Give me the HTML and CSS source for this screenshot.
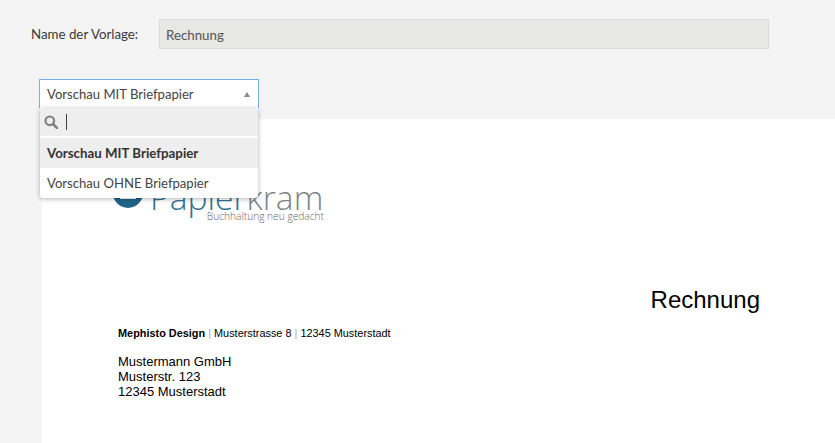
FILE: index.html
```html
<!DOCTYPE html>
<html lang="de">
<head>
<meta charset="utf-8">
<title>Vorlage</title>
<link rel="stylesheet" href="styles.css">
</head>
<body>
<div class="form-row">
  <label class="label">Name der Vorlage:</label>
  <div class="name-input">Rechnung</div>
</div>
<div class="select-wrap">
  <div class="select">
    <span>Vorschau MIT Briefpapier</span>
    <span class="arrow"></span>
  </div>
  <div class="dropdown">
    <div class="search">
      <svg class="search-icon" viewBox="0 0 14 14" width="14" height="14"><circle cx="5.8" cy="5.8" r="4.3" fill="none" stroke="#808080" stroke-width="2.2"/><path d="M9 9l4 4" stroke="#808080" stroke-width="2.6" stroke-linecap="round"/></svg>
      <span class="caret"></span>
    </div>
    <div class="option active">Vorschau MIT Briefpapier</div>
    <div class="option">Vorschau OHNE Briefpapier</div>
  </div>
</div>
<main class="paper">
  <div class="logo">
    <svg class="logo-mark" viewBox="0 0 30 30" width="30" height="30"><circle cx="15" cy="15" r="15" fill="#1f6488"/><rect x="7" y="6" width="16" height="15" fill="#fff"/><rect x="9" y="8" width="12" height="11" fill="#1f6488"/></svg>
    <div class="logo-text">
      <div class="logo-name"><span class="blue">Papier</span>kram</div>
      <div class="logo-tag">Buchhaltung neu gedacht</div>
    </div>
  </div>
  <h1 class="doc-title">Rechnung</h1>
  <div class="sender"><b>Mephisto Design</b> <i>|</i> Musterstrasse 8 <i>|</i> 12345 Musterstadt</div>
  <address class="recipient">Mustermann GmbH<br>Musterstr. 123<br>12345 Musterstadt</address>
</main>
</body>
</html>
```
FILE: styles.css
```css
* { box-sizing: border-box; }
html, body { height: 100%; }
body {
  margin: 0;
  background: #f4f4f4;
  font-family: "Lato", "Noto Sans", sans-serif;
  font-size: 13.3px;
  color: #333;
  overflow: hidden;
  position: relative;
}
.form-row {
  display: flex;
  align-items: center;
  padding: 19px 0 0 31px;
}
.label { width: 128px; color: #3a3a3a; }
.name-input {
  width: 610px;
  height: 30px;
  line-height: 30px;
  padding-left: 6px;
  background: #e7e7e3;
  border: 1px solid #dcdcd9;
  color: #555;
}
.select-wrap {
  position: absolute;
  left: 39px;
  top: 79px;
  width: 220px;
  z-index: 2;
  font-size: 13.1px;
}
.select {
  height: 29px;
  background: #fff;
  border: 1px solid #6fb1e8;
  border-bottom: 0;
  display: flex;
  align-items: center;
  justify-content: space-between;
  padding: 0 8px 0 7px;
  color: #444;
}
.arrow {
  width: 0;
  height: 0;
  border-left: 3.5px solid transparent;
  border-right: 3.5px solid transparent;
  border-top: 0;
  border-bottom: 5px solid #888;
}
.dropdown {
  margin-left: 1px;
  width: 218px;
  background: #fff;
  box-shadow: 0 1px 5px rgba(0,0,0,.3);
  border-radius: 0 0 3px 3px;
}
.search {
  height: 28px;
  background: #eee;
  display: flex;
  align-items: center;
  padding-left: 4px;
  margin-bottom: 2px;
}
.search-icon { display: block; }
.caret {
  width: 1px;
  height: 16px;
  background: #444;
  margin-left: 8px;
}
.option {
  height: 30px;
  line-height: 30px;
  padding-left: 7px;
  color: #444;
}
.option.active { background: #eee; font-weight: 700; color: #333; font-size: 13.3px; }
.paper {
  margin: 70px 0 0 42px;
  height: 324px;
  background: #fff;
  padding: 63px 75px 0 71px;
  font-family: "Liberation Sans", Arial, sans-serif;
  color: #000;
}
.logo { display: flex; align-items: flex-start; }
.logo-mark { flex: none; margin-top: -4px; }
.logo-text { margin-left: 5px; width: 177px; }
.logo-name {
  font-family: "Open Sans", sans-serif;
  font-weight: 300;
  font-size: 33.6px;
  line-height: 30px;
  color: #7f8588;
  white-space: nowrap;
  padding-left: 2px;
}
.blue { color: #2f7394; }
.logo-tag {
  font-family: "Open Sans", sans-serif;
  font-weight: 300;
  font-size: 10.2px;
  line-height: 12px;
  color: #666;
  text-align: right;
  padding-right: 1px;
  margin-top: -2px;
}
.doc-title {
  margin: 64px 0 0;
  font-size: 24px;
  line-height: 28px;
  font-weight: 400;
  text-align: right;
}
.sender { margin: 13px 0 0 5px; font-size: 10.9px; line-height: 13px; }
.sender i { font-style: normal; color: #aaa; }
.recipient {
  margin: 14px 0 0 5px;
  font-style: normal;
  font-size: 13px;
  line-height: 15px;
}
```
